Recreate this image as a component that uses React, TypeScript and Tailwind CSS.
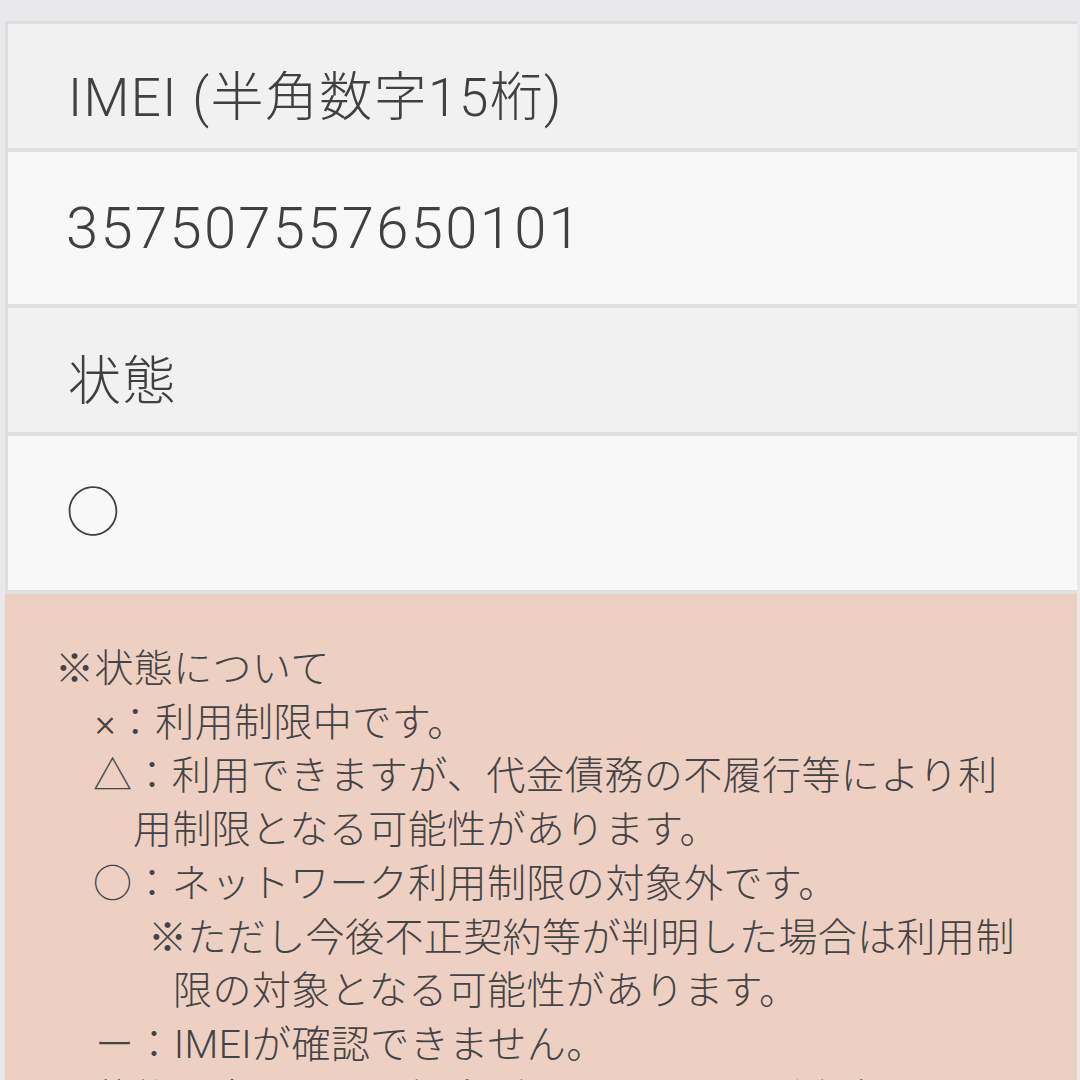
const font = { fontFamily: 'Roboto, "Noto Sans CJK JP", sans-serif' }

const noteLines: { text: string; pad: string }[] = [
  { text: '※状態について', pad: 'pl-[50px]' },
  { text: '×：利用制限中です。', pad: 'pl-[90px]' },
  { text: '△：利用できますが、代金債務の不履行等により利', pad: 'pl-[88px]' },
  { text: '用制限となる可能性があります。', pad: 'pl-[128px]' },
  { text: '○：ネットワーク利用制限の対象外です。', pad: 'pl-[88px]' },
  { text: '※ただし今後不正契約等が判明した場合は利用制', pad: 'pl-[143px]' },
  { text: '限の対象となる可能性があります。', pad: 'pl-[168px]' },
  { text: 'ー：IMEIが確認できません。', pad: 'pl-[90px]' },
  { text: '※状態は変更となる場合がありますのでご注意ください。', pad: 'pl-[50px]' },
]

function HeaderCell({ children }: { children: React.ReactNode }) {
  return (
    <div className="bg-[#f1f1f1] pl-[60px] pt-[44px] pb-[20px] text-[53px] font-light tracking-[1.4px] leading-[60px] text-[#404040]">
      {children}
    </div>
  )
}

function ValueCell({ children }: { children: React.ReactNode }) {
  return (
    <div className="bg-[#f8f8f8] pl-[58px] pt-[44px] pb-[44px] text-[58px] font-light tracking-[2.3px] leading-[64px] text-[#404040]">
      {children}
    </div>
  )
}

export default function App() {
  return (
    <div className="h-[1080px] overflow-hidden bg-[#e9e9eb] pt-[21px] pl-[5px] pr-[3px]" style={font}>
      <div className="flex flex-col gap-[4px] border-l-[3px] border-t-[3px] border-[#dedee0] bg-[#e0e0e2]">
        <HeaderCell>IMEI (半角数字15桁)</HeaderCell>
        <ValueCell>357507557650101</ValueCell>
        <HeaderCell>状態</HeaderCell>
        <ValueCell>
          <span className="text-[54px]">○</span>
        </ValueCell>
      </div>
      <div className="border-t-[4px] border-[#e0e0e2] bg-[#eed0c3] pt-[49px] pb-10 text-[39px] font-light tracking-[0.4px] leading-[53.7px] text-[#444444]">
        {noteLines.map((line, i) => (
          <div key={i} className={`whitespace-nowrap ${line.pad}`}>
            {line.text}
          </div>
        ))}
      </div>
    </div>
  )
}
